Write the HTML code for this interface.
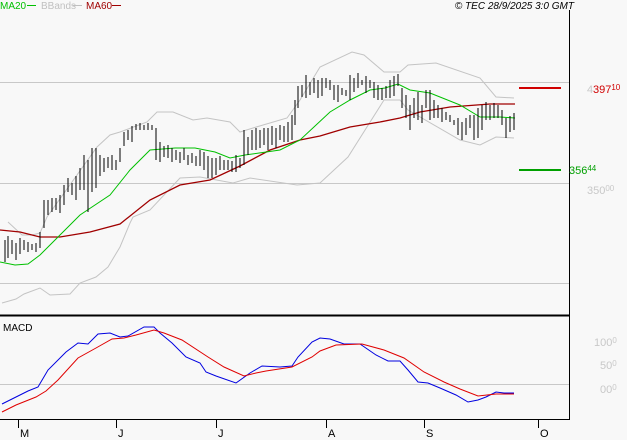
<!DOCTYPE html>
<html><head><meta charset="utf-8"><style>
html,body{margin:0;padding:0;background:#f8f8f8;}
svg{display:block;font-family:"Liberation Sans",sans-serif;}
</style></head><body>
<svg width="627" height="440" viewBox="0 0 627 440" xmlns="http://www.w3.org/2000/svg">
<rect width="627" height="440" fill="#f8f8f8"/>
<g stroke="#c8c8c8" stroke-width="1" fill="none">
<line x1="0" y1="82.5" x2="569" y2="82.5"/>
<line x1="0" y1="183.5" x2="569" y2="183.5"/>
<line x1="0" y1="283.5" x2="569" y2="283.5"/>
<line x1="0" y1="384.5" x2="569" y2="384.5"/>
</g>
<g fill="none" stroke="#c4c4c4" stroke-width="1">
<polyline points="8,222 22,235 32,235 40,233 47,217 97,147 110,135 120,132 147,122 157,112 173,112 193,120 207,118 230,122 240,132 253,128 287,118 295,107 300,100 320,67 352,52 364,55 384,72 400,72 408,65 436,63 480,78 496,97 514,98"/>
<polyline points="2,303 16,299 24,294 40,288 50,295 70,294 80,283 96,277 108,267 120,247 130,223 133,217 150,210 180,178 200,177 233,183 250,178 297,185 320,183 348,157 384,100 400,100 408,110 460,140 480,145 496,137 514,138"/>
</g>
<polyline fill="none" stroke="#a00000" stroke-width="1.3" points="0,230 20,232 40,237 60,237 90,232 120,224 150,200 180,185 210,180 240,166 270,150 300,140 320,136 350,127 380,122 400,118 420,112 450,107 490,104 515,104"/>
<polyline fill="none" stroke="#00c000" stroke-width="1" points="0,262 15,265 28,264 40,255 50,245 80,215 110,195 130,170 150,150 175,148 195,148 215,152 230,158 245,155 280,150 300,140 330,112 350,100 370,90 385,88 398,84 410,90 430,93 460,105 480,117 500,117 515,118"/>
<path fill="none" stroke="#000" stroke-width="1" d="M5 240V262M8 236V258M12 240V254M16 243V260M20 238V254M24 240V250M28 242V252M32 244V250M36 243V252M40 232V248M44 200V228M48 200V215M52 198V212M56 198V210M60 195V213M64 185V205M68 178V192M72 183V195M76 176V200M80 168V190M84 155V190M88 160V212M92 148V192M96 148V188M100 155V176M104 158V172M108 157V168M112 155V170M116 160V170M120 148V162M124 132V146M128 130V140M132 126V142M136 124V130M140 123V130M144 125V130M148 123V130M152 125V130M156 128V160M160 142V162M164 146V157M168 145V158M172 148V162M176 150V160M180 152V163M184 148V160M188 155V165M192 153V163M196 156V166M200 150V166M204 152V170M208 156V178M212 158V178M216 158V175M220 156V170M224 160V170M228 160V170M232 161V172M236 155V172M240 158V168M244 130V165M248 137V155M252 130V150M256 128V150M260 130V148M264 128V145M268 128V150M272 126V145M276 128V148M280 125V140M284 126V142M288 122V142M292 115V140M295 100V125M298 86V108M302 85V97M306 75V98M310 82V95M314 78V93M318 80V98M322 78V96M326 78V88M330 80V90M334 85V100M338 85V102M342 88V95M346 90V96M350 75V100M354 78V92M358 73V88M362 80V85M366 76V93M370 80V88M374 82V98M378 85V100M382 88V100M386 86V98M390 80V98M394 76V96M398 74V86M402 88V108M406 95V118M410 105V130M414 98V118M418 92V120M422 105V123M426 90V108M430 90V120M434 100V118M438 105V118M442 108V122M446 112V120M450 115V122M454 120V125M458 118V135M462 122V140M466 118V135M470 115V128M474 115V140M478 108V138M482 105V130M486 102V120M490 105V120M494 103V118M498 105V118M502 110V125M506 118V138M510 116V132M514 113V130"/>
<polyline fill="none" stroke="#0000e0" stroke-width="1" points="2,404 16,397 28,391 38,387 48,370 66,352 78,343 88,344 98,334 110,333 120,337 128,336 144,327 154,327 160,333 172,343 186,357 200,363 206,372 216,376 236,383 250,373 262,366 280,367 292,366 298,357 312,342 320,338 330,339 344,344 360,344 376,355 388,361 400,361 408,370 418,382 428,383 440,388 456,395 468,402 478,400 486,397 496,392 504,393 514,393"/>
<polyline fill="none" stroke="#e00000" stroke-width="1" points="2,412 16,405 36,397 46,391 58,380 78,358 96,348 112,339 124,338 136,335 154,330 164,333 182,340 208,357 224,367 244,376 256,373 266,371 292,367 312,357 320,351 336,345 362,344 384,350 404,358 424,372 444,382 460,389 478,396 496,394 514,394"/>
<line x1="569.5" y1="10" x2="569.5" y2="420" stroke="#000" stroke-width="1"/>
<line x1="0" y1="315.5" x2="570" y2="315.5" stroke="#000" stroke-width="2"/>
<line x1="0" y1="419.5" x2="570" y2="419.5" stroke="#000" stroke-width="1"/>
<g stroke="#000" stroke-width="1">
<line x1="18.5" y1="419" x2="18.5" y2="428"/>
<line x1="116.5" y1="419" x2="116.5" y2="428"/>
<line x1="216.5" y1="419" x2="216.5" y2="428"/>
<line x1="326.5" y1="419" x2="326.5" y2="428"/>
<line x1="424.5" y1="419" x2="424.5" y2="428"/>
<line x1="538.5" y1="419" x2="538.5" y2="428"/>
</g>
<g font-size="11" fill="#000">
<text x="20" y="437">M</text><text x="118" y="437">J</text><text x="218" y="437">J</text><text x="328" y="437">A</text><text x="426" y="437">S</text><text x="540" y="437">O</text>
<text x="3" y="331" font-size="10">MACD</text>
</g>
<g font-size="10">
<text x="0" y="9" fill="#00c000">MA20</text><line x1="27" y1="5.5" x2="36" y2="5.5" stroke="#00c000"/>
<text x="41" y="9" fill="#c0c0c0">BBands</text><line x1="73" y1="5.5" x2="82" y2="5.5" stroke="#c0c0c0"/>
<text x="86" y="9" fill="#a00000">MA60</text><line x1="112" y1="5.5" x2="121" y2="5.5" stroke="#a00000"/>
<text x="574" y="9" text-anchor="end" font-style="italic" fill="#000">© TEC 28/9/2025 3:0 GMT</text>
</g>
<line x1="519" y1="88" x2="561" y2="88" stroke="#d00000" stroke-width="2"/>
<line x1="519" y1="170" x2="561" y2="170" stroke="#00a000" stroke-width="2"/>
<g font-size="11">
<text x="587" y="93" fill="#c8c8c8">4</text>
<text x="593" y="93" fill="#d00000">397<tspan font-size="8" dy="-3">10</tspan></text>
<text x="569" y="174" fill="#00a000">356<tspan font-size="8" dy="-3">44</tspan></text>
<text x="587" y="194" fill="#c8c8c8">350<tspan font-size="8" dy="-3">00</tspan></text>
<text x="594" y="346" fill="#c8c8c8">100<tspan font-size="8" dy="-3">0</tspan></text>
<text x="600" y="369" fill="#c8c8c8">50<tspan font-size="8" dy="-3">0</tspan></text>
<text x="600" y="393" fill="#c8c8c8">00<tspan font-size="8" dy="-3">0</tspan></text>
</g>
</svg>
</body></html>
